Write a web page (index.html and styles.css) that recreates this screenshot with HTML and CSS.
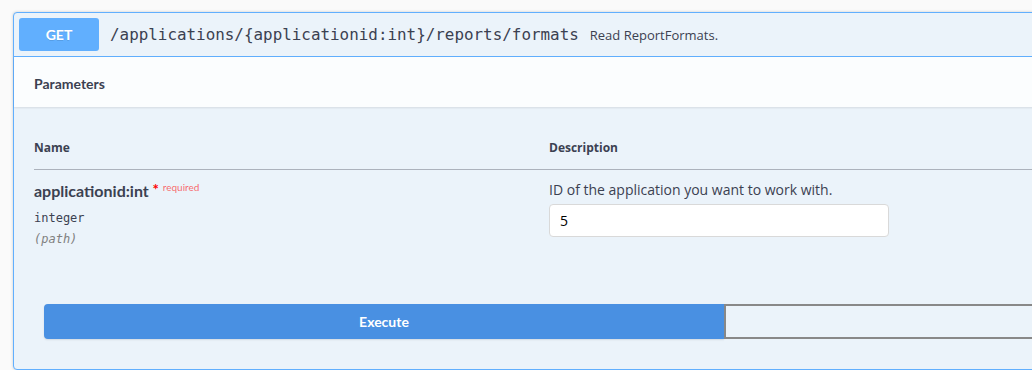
FILE: index.html
```html
<!DOCTYPE html>
<html>
<head>
<meta charset="utf-8">
<link rel="stylesheet" href="styles.css">
</head>
<body>
<div class="page">
  <div class="opblock">
    <div class="summary">
      <span class="method">GET</span>
      <span class="path">/applications/{applicationid:int}/reports/formats</span>
      <span class="summary-desc">Read ReportFormats.</span>
    </div>
    <div class="section-header">
      <h4 class="section-title">Parameters</h4>
    </div>
    <div class="table-container">
      <table class="params">
        <thead>
          <tr>
            <th class="col-name">Name</th>
            <th class="col-desc">Description</th>
          </tr>
        </thead>
        <tbody>
          <tr>
            <td class="col-name">
              <div class="param-name">applicationid:int<span class="star">&nbsp;*</span><span class="req">required</span></div>
              <div class="param-type">integer</div>
              <div class="param-in">(path)</div>
            </td>
            <td class="col-desc">
              <p class="param-desc">ID of the application you want to work with.</p>
              <input class="param-input" type="text" value="5">
            </td>
          </tr>
        </tbody>
      </table>
    </div>
    <div class="btn-group">
      <button class="btn execute">Execute</button>
      <button class="btn clear"></button>
    </div>
  </div>
</div>
</body>
</html>
```

FILE: styles.css
```css
html, body {
  margin: 0;
  padding: 0;
  background: #fafafa;
  overflow: hidden;
}

body {
  font-family: "Open Sans", "Liberation Sans", sans-serif;
  color: #3b4151;
}

.page {
  padding: 12px 0 0 13px;
}

.opblock {
  width: 1422px;
  box-sizing: border-box;
  border: 1px solid #61affe;
  border-radius: 4px;
  background: #ebf3fa;
  box-shadow: 0 0 3px rgba(0, 0, 0, 0.19);
}

.summary {
  display: flex;
  align-items: center;
  padding: 5px;
  border-bottom: 1px solid #61affe;
}

.method {
  min-width: 80px;
  box-sizing: border-box;
  padding: 6px 15px;
  line-height: 21px;
  text-align: center;
  background: #61affe;
  color: #fff;
  border-radius: 3px;
  font-family: Lato, "Open Sans", sans-serif;
  font-weight: 700;
  font-size: 14px;
  text-shadow: 0 1px 0 rgba(0, 0, 0, 0.1);
}

.path {
  padding: 0 10px 0 11px;
  font-family: "DejaVu Sans Mono", monospace;
  font-size: 15.9px;
  color: #3b4151;
}

.summary-desc {
  padding-left: 1px;
  font-size: 13px;
  color: #3b4151;
}

.section-header {
  display: flex;
  align-items: center;
  min-height: 50px;
  box-sizing: border-box;
  padding: 8px 20px;
  background: rgba(255, 255, 255, 0.8);
  box-shadow: 0 1px 2px rgba(0, 0, 0, 0.1);
}

.section-title {
  margin: 0;
  padding-top: 3px;
  font-family: Lato, "Open Sans", sans-serif;
  font-weight: 700;
  font-size: 14px;
  color: #3b4151;
}

.table-container {
  padding: 20px;
}

.params {
  width: 100%;
  border-collapse: collapse;
}

.params th {
  text-align: left;
  padding: 12px 0 13px;
  line-height: 17px;
  font-size: 12px;
  font-weight: 700;
  color: #3b4151;
  border-bottom: 1px solid rgba(59, 65, 81, 0.2);
}

.params td {
  vertical-align: top;
  padding: 10px 0;
}

.col-name {
  width: 515px;
}

.param-name {
  font-family: Lato, "Open Sans", sans-serif;
  font-weight: 700;
  font-size: 16px;
  line-height: 22px;
  color: #3b4151;
}

.star {
  position: relative;
  top: -2px;
  color: red;
  font-size: 15px;
}

.req {
  position: relative;
  top: -6px;
  padding: 5px 5px 5px 4px;
  font-size: 10px;
  font-weight: 400;
  color: rgba(255, 0, 0, 0.6);
}

.param-type {
  padding: 7px 0 6px;
  font-family: "DejaVu Sans Mono", monospace;
  font-size: 12px;
  line-height: 15px;
  color: #3b4151;
}

.param-in {
  font-family: "DejaVu Sans Mono", monospace;
  font-size: 12px;
  line-height: 14px;
  font-style: italic;
  color: gray;
}

.param-desc {
  margin: 0 0 4px;
  font-size: 14px;
  line-height: 20px;
  color: #3b4151;
}

.param-input {
  display: block;
  width: 340px;
  height: 33px;
  box-sizing: border-box;
  margin: 0;
  padding: 8px 10px;
  border: 1px solid #d9d9d9;
  border-radius: 4px;
  background: #fff;
  font-family: "Open Sans", sans-serif;
  font-size: 14px;
  color: #000;
  outline: none;
}

.btn-group {
  display: flex;
  padding: 28px 30px 30px;
}

.btn {
  flex: 1;
  height: 35px;
  margin: 0;
  font-family: Lato, "Open Sans", sans-serif;
  font-size: 14px;
  font-weight: 700;
  cursor: pointer;
}

.execute {
  border: 2px solid #4990e2;
  border-radius: 4px 0 0 4px;
  background: #4990e2;
  color: #fff;
  box-shadow: 0 1px 2px rgba(0, 0, 0, 0.1);
}

.clear {
  border: 2px solid #888;
  border-radius: 0 4px 4px 0;
  background: transparent;
  color: #3b4151;
}
```
